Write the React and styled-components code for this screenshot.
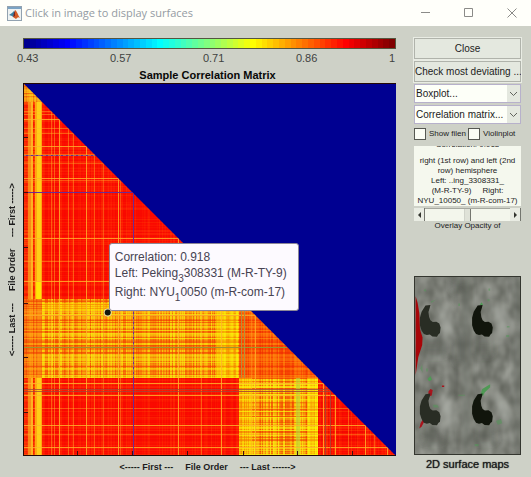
import React from 'react';
import styled, { createGlobalStyle } from 'styled-components';

const GlobalStyle = createGlobalStyle`
  * {
    box-sizing: border-box;
  }

  body {
    margin: 0;
    background: #ced1c7;
    color: #1c1c1c;
    font-family: 'Liberation Sans', Arial, sans-serif;
  }

  button, select, input {
    font-family: inherit;
    color: inherit;
  }
`;

const Window = styled.div`
  min-height: 100vh;
  background: #ced1c7;
`;

const TitleBar = styled.header`
  display: flex;
  align-items: center;
  height: 26px;
  padding: 0 14px 0 7px;
  background: #fffffa;
`;

const WindowTitle = styled.h1`
  flex: 1;
  margin: 0 0 0 3px;
  color: #949ba3;
  font: 400 11px/16px 'Open Sans', 'Noto Sans', sans-serif;
`;

const WindowButtons = styled.div`
  display: flex;
  gap: 33px;
`;

const WindowButton = styled.button`
  display: flex;
  width: 10px;
  height: 10px;
  padding: 0;
  border: 0;
  background: none;
  stroke: #8b8b88;
  fill: none;
`;

const Content = styled.main`
  display: grid;
  grid-template-columns: minmax(0, 1fr) 107px;
  gap: 18px;
  padding: 12px 10px 4px 0;
`;

const Figure = styled.section`
  display: grid;
  grid-template-columns: 23px minmax(0, 1fr);
`;

const ColorScale = styled.div`
  grid-column: 2;
`;

const ColorBar = styled.svg`
  display: block;
  width: 100%;
  height: 11px;
  border: 1px solid #54563f;
`;

const ScaleLabels = styled.div`
  display: flex;
  justify-content: space-between;
  margin: 3px 1px 0 -6px;
  color: #40423f;
  font-size: 11px;
  line-height: 13px;
`;

const FigureTitle = styled.h2`
  grid-column: 2;
  margin: 4px 4px 2px 0;
  color: #080808;
  font-size: 11px;
  line-height: 12px;
  text-align: center;
`;

const AxisLabel = styled.div`
  display: flex;
  align-items: center;
  justify-content: center;
  gap: 12px;
  font-size: 9px;
  font-weight: bold;
  line-height: 12px;
  white-space: nowrap;
  ${props => props.$vertical
    ? 'writing-mode: vertical-rl; transform: rotate(180deg);'
    : 'grid-column: 2; padding: 5px 4px 0 0;'}
`;

const Plot = styled.div`
  position: relative;
`;

const PlotImage = styled.svg`
  display: block;
  width: 100%;
`;

const DataTip = styled.div`
  position: absolute;
  top: 43%;
  left: 23%;
  padding: 6px 11px 6px 5px;
  border: 1px solid #8c8797;
  border-radius: 3px;
  background: #fdfaff;
  color: #474352;
  font-size: 12px;
  line-height: 15px;
  white-space: nowrap;

  p {
    margin: 0 0 1px;
  }

  sub {
    font-size: 10px;
    line-height: 10px;
    vertical-align: -5px;
  }
`;

const Panel = styled.aside`
  display: flex;
  flex-direction: column;
`;

const Stack = styled.div`
  display: grid;
  grid-template-columns: minmax(0, 1fr);
  gap: 2px;
`;

const PushButton = styled.button`
  height: 21px;
  padding: 0;
  border: 1px solid #b0b3ab;
  outline: 1px solid #e9ece4;
  background: #e4e8df;
  font-size: 10px;
  white-space: nowrap;
`;

const SelectBox = styled.div`
  position: relative;
  display: flex;
  height: 19px;

  svg {
    position: absolute;
    top: 1px;
    right: 1px;
    width: 13px;
    height: 17px;
    background: #e4e8df;
    pointer-events: none;
  }
`;

const Select = styled.select`
  width: 100%;
  padding: 0 0 0 1px;
  border: 1px solid #b7b1cb;
  border-radius: 0;
  background: #fdfff8;
  font-size: 10px;
  appearance: none;
`;

const CheckRow = styled.div`
  display: flex;
  gap: 1px;
  margin: 4px 0 6px;
`;

const CheckLabel = styled.label`
  display: flex;
  align-items: center;
  gap: 3px;
  width: ${props => props.$width};
  font-size: 8px;
  line-height: 12px;
  white-space: nowrap;
`;

const CheckBox = styled.input`
  flex: none;
  width: 12px;
  height: 12px;
  margin: 0;
  border: 1px solid #565852;
  background: #fbfdf5;
  appearance: none;
`;

const InfoBox = styled.div`
  display: flex;
  flex-direction: column;
  justify-content: flex-end;
  height: 60px;
  overflow: hidden;
  background: #f5f8ee;
  font-size: 8px;
  line-height: 10px;
  text-align: center;
  white-space: pre;
`;

const InfoHeading = styled.span`
  margin-bottom: 6px;
`;

const Scroller = styled.div`
  display: flex;
  height: 13px;
  margin-top: 2px;
  background: #f3f6ec;
`;

const ArrowButton = styled.button`
  display: flex;
  align-items: center;
  justify-content: center;
  width: 11px;
  padding: 0;
  border: 0;
  border-right: 1px solid #74766f;
  background: #e9ece3;

  svg {
    width: 5px;
    height: 6px;
    fill: #33352f;
  }
`;

const Slider = styled.input`
  flex: 1;
  min-width: 0;
  margin: 0;
  border-top: 1px solid #a5a79f;
  background: #f3f6ec;
  appearance: none;

  &::-webkit-slider-thumb {
    width: 7px;
    height: 12px;
    border-right: 1px solid #74766f;
    border-left: 1px solid #d0d3ca;
    background: #dfe2d8;
    appearance: none;
  }
`;

const SliderLabel = styled.label`
  font-size: 8px;
  line-height: 10px;
  text-align: center;
`;

const Surface = styled.figure`
  margin: auto 0 0;
`;

const SurfaceImage = styled.svg`
  display: block;
  width: 100%;
  border: 1px solid #34362f;
`;

const SurfaceCaption = styled.figcaption`
  padding: 2px 0;
  font-size: 11px;
  line-height: 14px;
  text-align: center;
  text-shadow: 0 0 1px #1c1c1c;
`;

const noise = (n, seed) => {
  const v = Math.sin(n * 12.9898 + seed * 78.233) * 43758.5453;
  return v - Math.floor(v);
};

const jet = t => {
  const channel = c => Math.round(255 * Math.min(1, Math.max(0, 1.5 - Math.abs(4 * t - c))));
  return `rgb(${channel(3)}, ${channel(2)}, ${channel(1)})`;
};

const SIZE = 372;

// correlation blocks between the sites, with the stripe colours inside them
const blocks = [
  { x: 0, y: 0, w: 19, h: 19, base: '#f68614', tones: ['#ffd21a', '#e84a00'], amp: 0.6 },
  { x: 0, y: 19, w: 19, h: 196, base: '#fb2a05', tones: ['#ff7a00', '#f20a00'], amp: 0.4 },
  { x: 19, y: 19, w: 196, h: 196, base: '#fd0b00', tones: ['#ff6a08', '#e80500'], amp: 0.22 },
  { x: 0, y: 215, w: 19, h: 79, base: '#f87012', tones: ['#ffb010', '#ee3a00'], amp: 0.6 },
  { x: 19, y: 215, w: 196, h: 79, base: '#fb900c', tones: ['#f8f010', '#f03c00'], amp: 0.7 },
  { x: 215, y: 215, w: 79, h: 79, base: '#fb5404', tones: ['#ff9a10', '#ee2400'], amp: 0.5 },
  { x: 0, y: 294, w: 19, h: 78, base: '#fb2a05', tones: ['#ff8a00', '#f20a00'], amp: 0.4 },
  { x: 19, y: 294, w: 196, h: 78, base: '#fd0b00', tones: ['#ff6a08', '#e80500'], amp: 0.24 },
  { x: 215, y: 294, w: 79, h: 78, base: '#fb960c', tones: ['#f8f410', '#f04000'], amp: 0.8 },
  { x: 294, y: 294, w: 78, h: 78, base: '#fd0b00', tones: ['#ff6a08', '#dc0500'], amp: 0.3 },
];

const lines = [28, 31, 36, 45, 50, 63, 71, 80, 95, 97, 155, 178, 197, 227, 231, 299, 311, 324, 341, 350, 363];
const strong = [36, 63, 95, 155, 197, 231, 299, 311, 341, 363];
const ticks = [54, 109, 164, 219, 273, 328];

const Block = ({ x, y, w, h, base, tones, amp }) => (
  <g>
    <rect x={x} y={y} width={w} height={h} fill={base} />
    {Array.from({ length: w }, (_, i) => (
      <rect key={i} x={x + i} y={y} width="1" height={h} fill={tones[noise(x + i, 2) > 0.45 ? 0 : 1]} opacity={amp * noise(x + i, 5)} />
    ))}
    {Array.from({ length: h }, (_, i) => (
      <rect key={i} x={x} y={y + i} width={w} height="1" fill={tones[noise(y + i, 2) > 0.45 ? 0 : 1]} opacity={amp * noise(y + i, 5)} />
    ))}
  </g>
);

const Matrix = () => (
  <PlotImage viewBox={`0 0 ${SIZE} ${SIZE}`} role="img" aria-label="Sample Correlation Matrix" shapeRendering="crispEdges">
    <defs>
      <clipPath id="lower">
        <path d={`M0 0L${SIZE} ${SIZE}H0Z`} />
      </clipPath>
    </defs>
    <rect width={SIZE} height={SIZE} fill="#000091" />
    <g clipPath="url(#lower)">
      {blocks.map((block, i) => <Block key={i} {...block} />)}
      {[[19, 196], [294, 78]].map(([y, h]) => (
        <g key={y}>
          <rect x="5" y={y} width="5" height={h} fill="#fb9a1c" opacity="0.8" />
          <rect x="8" y={y} width="2" height={h} fill="#ffd028" opacity="0.6" />
          <rect x="12" y={y} width="7" height={h} fill="#ffa610" />
          <rect x="14" y={y} width="4" height={h} fill="#ffd818" opacity="0.8" />
        </g>
      ))}
      <rect x="13" y="198" width="5" height="17" fill="#fff000" opacity="0.7" />
      <rect x="19" y="219" width="196" height="8" fill="#fff000" opacity="0.4" />
      <rect x="192" y="215" width="22" height="79" fill="#fcff00" opacity="0.38" />
      <rect x="215" y="294" width="13" height="78" fill="#fff000" opacity="0.35" />
      <rect x="283" y="294" width="11" height="78" fill="#fcff00" opacity="0.4" />
      <rect x="272" y="294" width="4" height="78" fill="#b7d83c" opacity="0.6" />
      {lines.map(n => (
        <g key={n} fill="#ffb62c" opacity={strong.includes(n) ? 0.8 : 0.4}>
          <rect x={n} y={n} width="1" height={SIZE - n} />
          <rect x="0" y={n} width={n} height="1" />
        </g>
      ))}
      <g fill="#6a2c96">
        <rect x="110" y="110" width="1" height="262" />
        <rect x="0" y="109" width="110" height="1" />
        <rect x="0" y="72" width="72" height="1" />
      </g>
      <path d="M0 72.500H72M110.500 215V294" stroke="#a07060" strokeDasharray="3 2" fill="none" />
      <rect x="0" y="263" width="263" height="1" fill="#a0962c" />
      <g fill="#a04a38" opacity="0.8">
        <rect x="0" y="305" width="305" height="1" />
        <rect x="0" y="307" width="307" height="1" />
        <rect x="301" y="302" width="1" height="70" />
        <rect x="306" y="307" width="1" height="65" />
      </g>
      <g fill="#b4903c">
        <rect x="217" y="218" width="1" height="76" />
        <rect x="220" y="221" width="1" height="73" />
      </g>
    </g>
    <path
      d={ticks.map(t => `M${t}.5 372v-5M0 ${t}.5h5`).join('')}
      stroke="#401010"
      fill="none"
    />
    <path d="M0 .5H372M.5 0V372M0 371.500H372" stroke="#240804" fill="none" />
    <g shapeRendering="auto">
      <circle cx="84.500" cy="229" r="4" fill="#eadf9c" />
      <circle cx="84.500" cy="229" r="3" fill="#15180e" />
    </g>
  </PlotImage>
);

const MatlabIcon = () => (
  <svg width="15" height="15" viewBox="0 0 15 15" aria-hidden="true">
    <rect x=".5" y=".5" width="14" height="14" fill="#eef2f2" stroke="#92a2b0" />
    <path d="M1 1h13v2H1z" fill="#7ba3c4" />
    <path d="M2 9l3-2 2-2 1 2-2 4-1-1z" fill="#387ca0" />
    <path d="M8 4c2 1 3 5 5 8-2-2-3 0-4 1L6 11l2-3z" fill="#d45a24" />
    <path d="M8 4v6l-2 1 1-4z" fill="#79241d" />
  </svg>
);

const hippo = 'M75 116L60 118 48 137 43 155 43 178 48 194 55 205 64 208 73 206 81 212 95 213 99 206 104 202 106 185 102 173 93 167 82 168 75 163 71 153 69 138 73 125Z';

const SurfaceMap = () => (
  <SurfaceImage viewBox="28 31 320 538" role="img" aria-label="2D surface maps of both hemispheres">
    <defs>
      <filter id="cortex" x="0" y="0" width="100%" height="100%" colorInterpolationFilters="sRGB">
        <feTurbulence type="fractalNoise" baseFrequency=".03 .02" numOctaves="2" seed="8" />
        <feColorMatrix values=".3 0 0 0 .34 .3 0 0 0 .35 .3 0 0 0 .32 0 0 0 0 1" />
      </filter>
      <filter id="soft">
        <feGaussianBlur stdDeviation="12" />
      </filter>
    </defs>
    <rect x="28" y="31" width="320" height="538" fill="#7d8078" />
    <rect x="28" y="31" width="320" height="538" filter="url(#cortex)" />
    <g filter="url(#soft)">
      <path d="M172 31h20V569h-20zM335 31h13V569h-13z" fill="#686c64" opacity=".7" />
      <path d="M100 110q40 30 45 90l-30 30zM265 110q40 20 60 90l-40 20zM110 380q40 40 40 100l-40 20zM265 380q40 20 60 90l-30 20z" fill="#b4b7b0" opacity=".6" />
      <path d="M50 225h70v45H50zM212 220h50v50h-50zM50 495h65v40H50zM212 495h60v40h-60zM140 35h40v40h-40zM152 210h34v85h-34z" fill="#51564e" opacity=".5" />
    </g>
    <path d="M30 90L36 110 41 140 43 190 51 215 50 238 38 275 30 330Z" fill="#a80508" />
    <path d="M69 380l6-8 7 3-3 17-10 4zM45 477l6-11 5 6-8 15-7 6zM110 362h7v4h-7z" fill="#a8141c" />
    <g fill="#4f9955">
      <path d="M228 388l5-16 24-14v9l-16 15-6 12zM225 116l6-8 5 8zM66 342l9-9 5 11-9 5z" />
      <path d="M54 74l5-8 4 9zM252 66h5v7h-5zM249 99h6v6h-6zM77 105l14-5-13 10zM308 180h8v5h-8zM306 208h9v6h-9zM82 420h14l5 9H86zM275 470l15-6 4 13-14 4zM204 415l8-13 2 16zM210 540h12v7h-12zM160 390h20v3h-20zM44 310l6-12 1 25zM62 310h5v9h-5zM160 112h5v7h-5z" opacity=".5" />
    </g>
    <g fill="#292d24">
      <path d={hippo} />
      <path d={hippo} transform="translate(0 270)" />
    </g>
    <g fill="#11150c">
      <path d={hippo} transform="translate(159 0)" />
      <path d={hippo} transform="translate(159 270)" />
    </g>
  </SurfaceImage>
);

const DropDown = ({ label, options }) => (
  <SelectBox>
    <Select aria-label={label}>
      {options.map(option => <option key={option}>{option}</option>)}
    </Select>
    <svg viewBox="0 0 13 17" fill="none" stroke="#62645e" aria-hidden="true">
      <path d="M3 7l3.500 3.500L10 7" />
    </svg>
  </SelectBox>
);

const App = () => {
  return (
    <Window>
      <GlobalStyle />
      <TitleBar>
        <MatlabIcon />
        <WindowTitle>Click in image to display surfaces</WindowTitle>
        <WindowButtons>
          <WindowButton aria-label="Minimize">
            <svg width="10" height="10"><path d="M0 4.500h9" /></svg>
          </WindowButton>
          <WindowButton aria-label="Maximize">
            <svg width="10" height="10"><path d="M.5 .5h8v8h-8z" /></svg>
          </WindowButton>
          <WindowButton aria-label="Close window">
            <svg width="10" height="10"><path d="M.5 .5l9 9M9.500 .5l-9 9" /></svg>
          </WindowButton>
        </WindowButtons>
      </TitleBar>
      <Content>
        <Figure>
          <ColorScale>
            <ColorBar viewBox="0 0 64 1" preserveAspectRatio="none" shapeRendering="crispEdges" aria-hidden="true">
              {Array.from({ length: 64 }, (_, i) => (
                <rect key={i} x={i} width="1" height="1" fill={jet((i + 1) / 64)} />
              ))}
            </ColorBar>
            <ScaleLabels>
              <span>0.43</span>
              <span>0.57</span>
              <span>0.71</span>
              <span>0.86</span>
              <span>1</span>
            </ScaleLabels>
          </ColorScale>
          <FigureTitle>Sample Correlation Matrix</FigureTitle>
          <AxisLabel $vertical>
            <span>&lt;----- Last ---</span>
            <span>File Order</span>
            <span>--- First -----&gt;</span>
          </AxisLabel>
          <Plot>
            <Matrix />
            <DataTip role="tooltip">
              <p>Correlation: 0.918</p>
              <p>Left: Peking<sub>3</sub>308331 (M-R-TY-9)</p>
              <p>Right: NYU<sub>1</sub>0050 (m-R-com-17)</p>
            </DataTip>
          </Plot>
          <AxisLabel>
            <span>&lt;----- First ---</span>
            <span>File Order</span>
            <span>--- Last ------&gt;</span>
          </AxisLabel>
        </Figure>
        <Panel>
          <Stack>
            <PushButton>Close</PushButton>
            <PushButton>Check most deviating ...</PushButton>
            <DropDown label="Plot type" options={['Boxplot...']} />
            <DropDown label="Matrix" options={['Correlation matrix...']} />
          </Stack>
          <CheckRow>
            <CheckLabel $width="53px"><CheckBox type="checkbox" />Show filen</CheckLabel>
            <CheckLabel><CheckBox type="checkbox" />Violinplot</CheckLabel>
          </CheckRow>
          <InfoBox>
            <InfoHeading>Correlation: 0.918</InfoHeading>
            <span>right (1st row) and left (2nd</span>
            <span>row) hemisphere</span>
            <span>Left: ..ing_3308331_</span>
            <span>(M-R-TY-9)     Right:</span>
            <span>NYU_10050_ (m-R-com-17)</span>
          </InfoBox>
          <Scroller>
            <ArrowButton aria-label="Decrease opacity">
              <svg viewBox="0 0 5 6"><path d="M4 0v6L1 3z" /></svg>
            </ArrowButton>
            <Slider id="opacity" type="range" min="0" max="100" defaultValue="50" />
            <ArrowButton aria-label="Increase opacity">
              <svg viewBox="0 0 5 6"><path d="M1 0v6l3-3z" /></svg>
            </ArrowButton>
          </Scroller>
          <SliderLabel htmlFor="opacity">Overlay Opacity of</SliderLabel>
          <Surface>
            <SurfaceMap />
            <SurfaceCaption>2D surface maps</SurfaceCaption>
          </Surface>
        </Panel>
      </Content>
    </Window>
  );
};

export default App;
